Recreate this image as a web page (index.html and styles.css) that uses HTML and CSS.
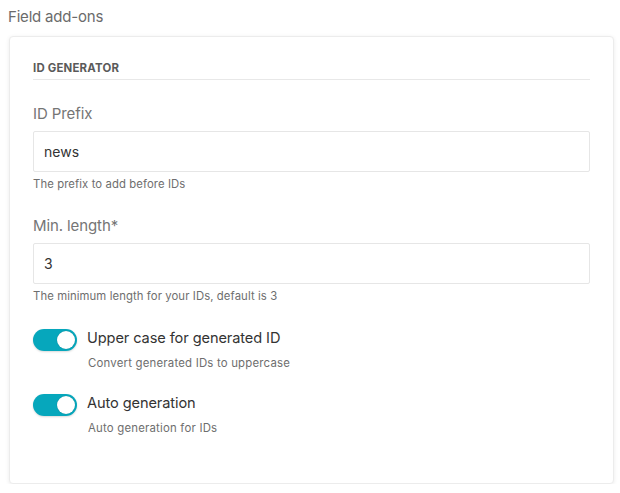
FILE: index.html
```html
<!DOCTYPE html>
<html>
<head>
<meta charset="utf-8">
<link rel="stylesheet" href="styles.css">
</head>
<body>
<div class="page">
  <div class="page-title">Field add-ons</div>
  <div class="card">
    <div class="section-title">ID GENERATOR</div>
    <div class="field">
      <div class="label">ID Prefix</div>
      <div class="input">news</div>
      <div class="help">The prefix to add before IDs</div>
    </div>
    <div class="field">
      <div class="label">Min. length*</div>
      <div class="input">3</div>
      <div class="help">The minimum length for your IDs, default is 3</div>
    </div>
    <div class="toggle-row">
      <div class="toggle on"><span class="knob"></span></div>
      <div class="toggle-text">
        <div class="toggle-label">Upper case for generated ID</div>
        <div class="toggle-help">Convert generated IDs to uppercase</div>
      </div>
    </div>
    <div class="toggle-row">
      <div class="toggle on"><span class="knob"></span></div>
      <div class="toggle-text">
        <div class="toggle-label">Auto generation</div>
        <div class="toggle-help">Auto generation for IDs</div>
      </div>
    </div>
  </div>
</div>
</body>
</html>
```
FILE: styles.css
```css
* { box-sizing: border-box; }
html, body { margin: 0; padding: 0; background: #fff; }
body {
  font-family: Inter, "Noto Sans", sans-serif;
  color: #333;
}
.page {
  padding: 6px 6px 0 8px;
}
.page-title {
  font-size: 15px;
  line-height: 22px;
  color: #6b6b6b;
  letter-spacing: -0.2px;
}
.card {
  margin: 8px 0 0 1px;
  width: 605px;
  height: 448px;
  border: 1px solid #ececec;
  border-radius: 4px;
  box-shadow: 0 1px 4px rgba(0,0,0,0.08);
  padding: 23px 23px 0 23px;
  background: #fff;
}
.section-title {
  font-size: 11.4px;
  font-weight: 700;
  color: #5a5a5a;
  line-height: 16px;
  padding-bottom: 3px;
  border-bottom: 1px solid #e8e8e8;
  letter-spacing: 0.2px;
}
.field {
  margin-top: 24px;
}
.field + .field { margin-top: 25px; }
.label {
  font-size: 15px;
  line-height: 20px;
  color: #757575;
  letter-spacing: -0.1px;
}
.input {
  margin-top: 7px;
  height: 41px;
  border: 1px solid #e6e6e6;
  border-radius: 2px;
  padding: 0 10px;
  font-size: 14px;
  line-height: 39px;
  color: #333;
}
.help {
  margin-top: 5px;
  font-size: 11.3px;
  line-height: 14px;
  color: #6e6e6e;
  letter-spacing: 0.1px;
}
.toggle-row {
  display: flex;
  align-items: flex-start;
  gap: 10px;
  margin-top: 26px;
}
.toggle-row + .toggle-row { margin-top: 24px; }
.toggle {
  flex: none;
  width: 44px;
  height: 22px;
  border-radius: 11px;
  background: #06a7bc;
  position: relative;
  box-shadow: 0 1px 2px rgba(0,0,0,0.15);
}
.knob {
  position: absolute;
  top: 2px;
  right: 2px;
  width: 18px;
  height: 18px;
  border-radius: 50%;
  background: #fff;
  box-shadow: 0 0 1px rgba(0,0,0,0.3);
}
.toggle-label {
  font-size: 14.6px;
  line-height: 18px;
  color: #333;
  letter-spacing: -0.1px;
}
.toggle-help {
  margin-top: 9px;
  font-size: 11.4px;
  line-height: 14px;
  color: #6e6e6e;
  padding-left: 1px;
  letter-spacing: 0.2px;
}
```
